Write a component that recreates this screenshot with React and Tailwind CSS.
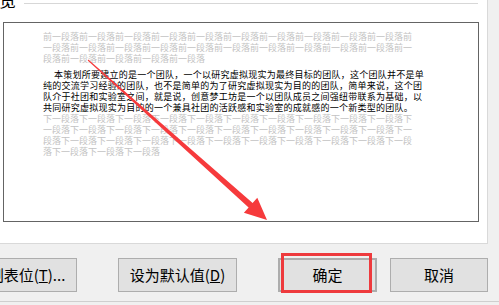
const FONT = { fontFamily: '"Noto Sans CJK SC", "Noto Sans", sans-serif' };

const before = [
  "前一段落前一段落前一段落前一段落前一段落前一段落前一段落前一段落前一段落前一段落前",
  "一段落前一段落前一段落前一段落前一段落前一段落前一段落前一段落前一段落前一段落前一",
  "段落前一段落前一段落前一段落前一段落",
];

const body = [
  "本策划所要建立的是一个团队，一个以研究虚拟现实为最终目标的团队，这个团队并不是单",
  "纯的交流学习经验的团队，也不是简单的为了研究虚拟现实为目的的团队，简单来说，这个团",
  "队介于社团和实验室之间，就是说，创意梦工坊是一个以团队成员之间强纽带联系为基础，以",
  "共同研究虚拟现实为目的的一个兼具社团的活跃感和实验室的成就感的一个新类型的团队。",
];

const after = [
  "下一段落下一段落下一段落下一段落下一段落下一段落下一段落下一段落下一段落下一段落下",
  "一段落下一段落下一段落下一段落下一段落下一段落下一段落下一段落下一段落下一段落下一",
  "段落下一段落下一段落下一段落下一段落下一段落下一段落下一段落下一段落下一段落下一段",
  "落下一段落下一段落下一段落",
];

function Btn({ children, className = "" }) {
  return (
    <div
      className={`h-[34px] flex items-center justify-center bg-[#e1e1e1] border border-[#adadad] text-[15px] text-black ${className}`}
    >
      {children}
    </div>
  );
}

export default function App() {
  return (
    <div className="relative w-[499px] h-[305px] overflow-hidden bg-[#f0f0f0] flex flex-col" style={FONT}>
      <div className="flex">
        <div className="w-[488px] h-[244px] bg-white border-r border-b border-[#d9d9d9] flex flex-col">
          <div className="h-[22px] flex items-start">
            <span className="text-[17px] leading-[17px] -mt-[9px] -ml-[1px] text-black">览</span>
            <div className="flex-1 h-px mt-[3px] ml-[8px] mr-[9px] bg-[#d7d7d7]" />
          </div>
          <div className="ml-[3px] w-[476px] h-[200px] border border-[#646464] pl-[39px] pt-[8px]">
            <div className="text-[9px] leading-[11px] text-[#c3c3c3] whitespace-nowrap">
              {before.map((l, i) => (
                <div key={i}>{l}</div>
              ))}
            </div>
            <div className="mt-[5px] text-[9px] leading-[11px] tracking-[0.25px] text-black whitespace-nowrap">
              {body.map((l, i) => (
                <div key={i} className={i === 0 ? "pl-[11px]" : ""}>
                  {l}
                </div>
              ))}
            </div>
            <div className="text-[9px] leading-[11px] text-[#c3c3c3] whitespace-nowrap">
              {after.map((l, i) => (
                <div key={i}>{l}</div>
              ))}
            </div>
          </div>
        </div>
        <div className="flex-1" />
      </div>

      <div className="h-[58px] flex items-start pt-[14px] border-b border-[#cfcfcf]">
        <Btn className="w-[100px] -ml-[23px]">
          制表位(<span className="underline">T</span>)...
        </Btn>
        <Btn className="w-[119px] ml-[41px]">
          设为默认值(<span className="underline">D</span>)
        </Btn>
        <div className="relative ml-[41px]">
          <Btn className="w-[99px] border-2 border-[#0078d7]">确定</Btn>
          <div className="absolute -top-[5px] left-[3px] w-[91px] h-[40px] border-[3px] border-[#ee3a3d]" />
        </div>
        <Btn className="w-[98px] ml-[13px]">取消</Btn>
      </div>

      <svg className="absolute left-0 top-0 pointer-events-none" width="499" height="305">
        <polygon
          points="88.3,59.6 252.6,203.1 257.3,197.8 267,220 243.9,212.8 248.6,207.5 87.7,60.4"
          fill="#f63a3c"
        />
      </svg>
    </div>
  );
}
